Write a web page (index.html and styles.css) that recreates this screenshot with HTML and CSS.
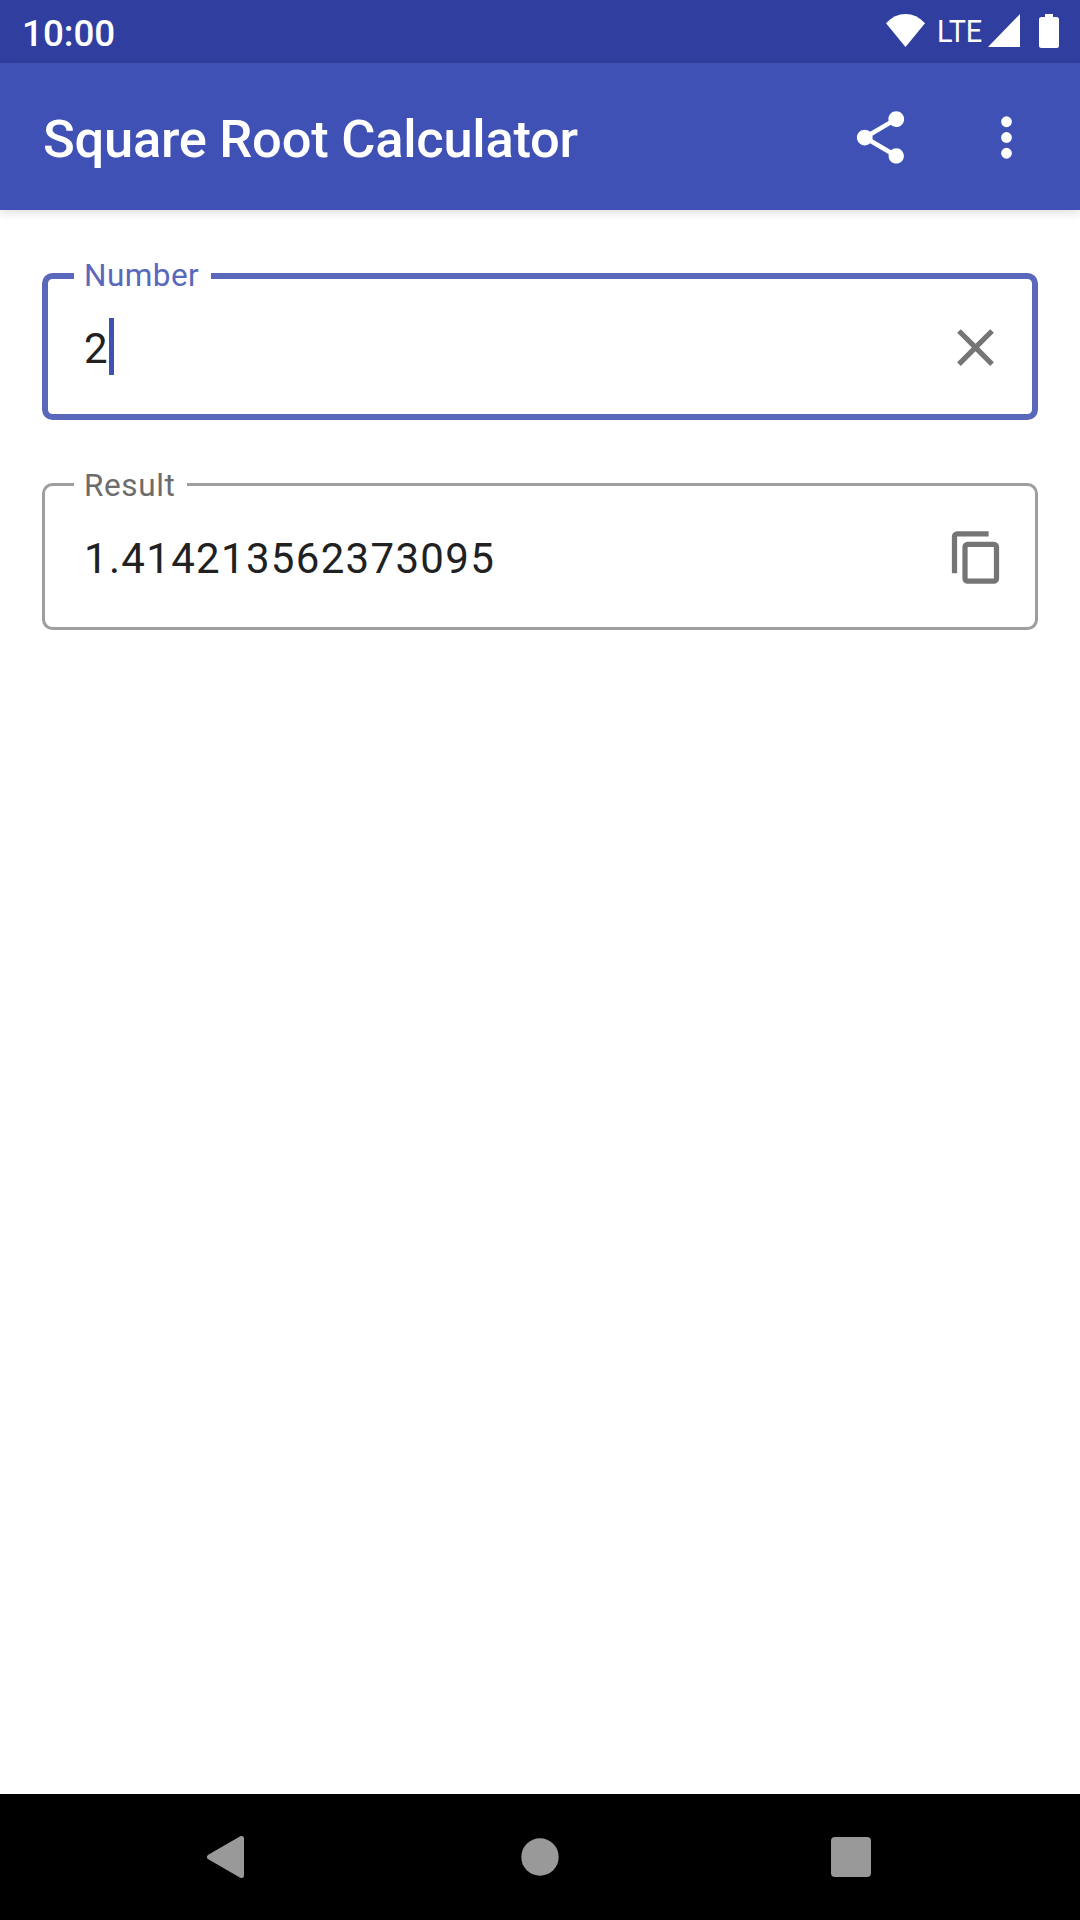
FILE: index.html
```html
<!DOCTYPE html>
<html lang="en">
<head>
<meta charset="utf-8">
<title>Square Root Calculator</title>
<link rel="stylesheet" href="styles.css">
</head>
<body>
<div class="status-bar">
  <span class="clock">10:00</span>
  <div class="status-icons">
    <svg class="wifi" viewBox="0 0 39 33"><path d="M0 9.2Q8.5 0 19.5 0T39 9.2L19.5 33Z"/></svg>
    <span class="network">LTE</span>
    <svg class="signal" viewBox="0 0 32 33"><path d="M32 0V33H0Z"/></svg>
    <svg class="battery" viewBox="0 0 20 34"><path d="M6 0h8v3h3.500a2.500 2.500 0 0 1 2.500 2.500v26a2.500 2.500 0 0 1-2.500 2.500h-15a2.500 2.500 0 0 1-2.500-2.500v-26a2.500 2.500 0 0 1 2.500-2.500H6z"/></svg>
  </div>
</div>
<header class="app-bar">
  <h1 class="title">Square Root Calculator</h1>
  <button class="action" aria-label="Share">
    <svg class="icon" viewBox="0 0 24 24"><path d="M18 16.080c-.76 0-1.440.3-1.960.77L8.910 12.700c.05-.23.09-.46.09-.7s-.04-.47-.09-.7l7.050-4.110c.54.5 1.250.81 2.040.81 1.660 0 3-1.340 3-3s-1.340-3-3-3-3 1.340-3 3c0 .24.04.47.09.7L8.040 9.810C7.500 9.310 6.790 9 6 9c-1.660 0-3 1.340-3 3s1.340 3 3 3c.79 0 1.500-.31 2.040-.81l7.120 4.160c-.05.21-.08.43-.08.65 0 1.610 1.310 2.920 2.920 2.920s2.920-1.310 2.920-2.920-1.310-2.920-2.920-2.920z"/></svg>
  </button>
  <button class="action" aria-label="More options">
    <svg class="icon" viewBox="0 0 24 24"><circle cx="12" cy="6" r="2.050"/><circle cx="12" cy="12" r="2.050"/><circle cx="12" cy="18" r="2.050"/></svg>
  </button>
</header>
<main class="content">
  <fieldset class="field field-focused">
    <legend class="label">Number</legend>
    <div class="row">
      <span class="value">2</span>
      <span class="caret"></span>
      <button class="field-action" aria-label="Clear">
        <svg class="icon" viewBox="0 0 24 24"><path d="M19 6.410 17.590 5 12 10.590 6.410 5 5 6.410 10.590 12 5 17.590 6.410 19 12 13.410 17.590 19 19 17.590 13.410 12z"/></svg>
      </button>
    </div>
  </fieldset>
  <fieldset class="field field-result">
    <legend class="label">Result</legend>
    <div class="row">
      <span class="value">1.414213562373095</span>
      <button class="field-action" aria-label="Copy">
        <svg class="icon" viewBox="0 0 24 24"><path d="M17 2H5a2 2 0 0 0-2 2v14h2V4h12zM19 6H9a2 2 0 0 0-2 2v12a2 2 0 0 0 2 2h10a2 2 0 0 0 2-2V8a2 2 0 0 0-2-2zm0 14H9V8h10z"/></svg>
      </button>
    </div>
  </fieldset>
</main>
<nav class="nav-bar">
  <svg class="nav-icon" viewBox="0 0 80 80"><path d="M23.500 40 55.500 21.500V58.500Z" stroke-width="5" stroke-linejoin="round"/></svg>
  <svg class="nav-icon" viewBox="0 0 80 80"><circle cx="40" cy="40" r="18.700"/></svg>
  <svg class="nav-icon" viewBox="0 0 80 80"><rect x="17" y="20" width="40" height="40" rx="4"/></svg>
</nav>
</body>
</html>
```
FILE: styles.css
```css
* {
  box-sizing: border-box;
}

body {
  margin: 0;
  height: 1920px;
  display: flex;
  flex-direction: column;
  background: #fff;
  font-family: Roboto, "Liberation Sans", sans-serif;
}

button {
  border: 0;
  padding: 0;
  background: none;
  color: inherit;
  display: flex;
}

svg {
  display: block;
  fill: currentColor;
}

.icon {
  width: 63px;
  height: 63px;
}

.status-bar {
  height: 63px;
  padding: 0 21px 0 22px;
  display: flex;
  justify-content: space-between;
  background: #303f9f;
  color: #fff;
}

.clock {
  font-size: 36.75px;
  font-weight: 500;
  line-height: 67px;
}

.status-icons {
  display: flex;
  padding-top: 14px;
}

.wifi {
  width: 39px;
  height: 33px;
}

.network {
  width: 42px;
  margin-left: 12px;
  font-size: 32px;
  line-height: 34px;
  transform: scaleX(0.9);
  transform-origin: left;
}

.signal {
  width: 32px;
  height: 33px;
  margin-left: 9px;
}

.battery {
  width: 20px;
  height: 34px;
  margin-left: 19px;
}

.app-bar {
  height: 147px;
  padding: 1px 42px 0 43px;
  display: flex;
  align-items: center;
  gap: 63px;
  background: #3f51b5;
  color: #fff;
  box-shadow: 0 3px 9px rgba(0, 0, 0, 0.13);
}

.title {
  flex: 1;
  margin: 0;
  padding-top: 3px;
  font-size: 52.5px;
  font-weight: 500;
  letter-spacing: -0.27px;
}

.content {
  flex: 1;
  display: flex;
  flex-direction: column;
  gap: 46px;
  padding: 48px 42px;
}

.field {
  min-width: 0;
  margin: 0;
  padding: 0 25px 0 26px;
  border: 3px solid #9e9e9e;
  border-radius: 10.5px;
  color: #6c6c6c;
}

.label {
  margin-left: 3px;
  padding: 2px 12px 0 10px;
  font-size: 31.5px;
  letter-spacing: 0.6px;
  line-height: 35px;
}

.row {
  display: flex;
  align-items: center;
}

.value {
  padding-top: 2px;
  font-size: 42px;
  letter-spacing: 0.03125em;
  color: #212121;
}

.field-action {
  margin-left: auto;
  color: #757575;
}

.field-focused {
  height: 162px;
  border: 6px solid #5a68bc;
  color: #5a68bc;
}

.field-focused .label {
  margin-left: 0;
  padding-top: 0;
  line-height: 36px;
  letter-spacing: 0.45px;
}

.field-focused .row {
  height: 106px;
  padding-left: 10px;
}

.caret {
  width: 5px;
  height: 57px;
  margin-bottom: 2px;
  background: #3f51b5;
}

.field-result {
  height: 164px;
  padding-right: 28px;
}

.field-result .row {
  height: 109px;
  padding-left: 13px;
}

.nav-bar {
  height: 126px;
  padding: 0 186px;
  display: flex;
  justify-content: space-between;
  align-items: center;
  background: #000;
  color: #999;
}

.nav-icon {
  width: 80px;
  height: 80px;
  stroke: currentColor;
  stroke-width: 0;
}
```
